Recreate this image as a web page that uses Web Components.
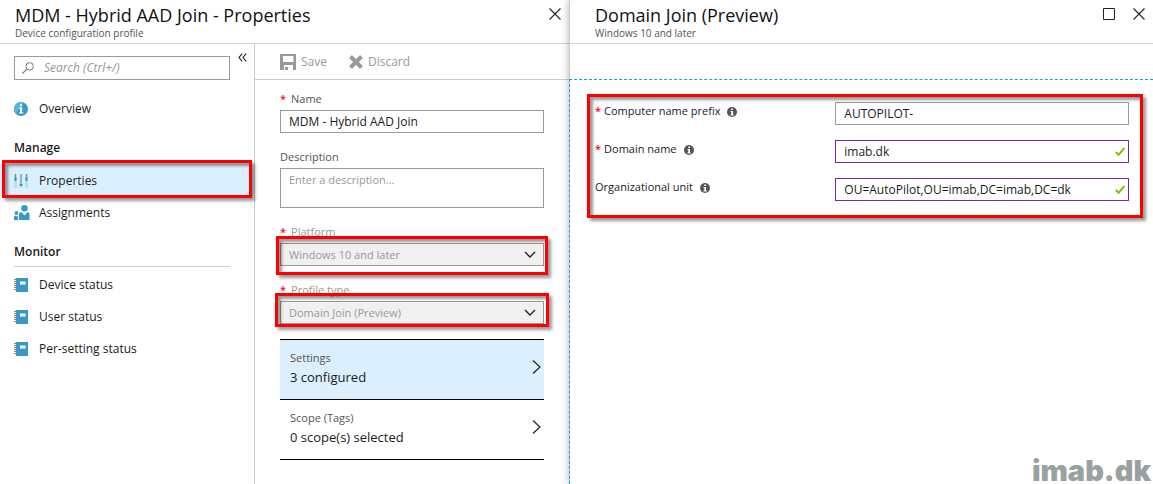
<!DOCTYPE html>
<html lang="en">
<head>
<meta charset="utf-8">
<title>MDM - Hybrid AAD Join - Properties</title>
<style>
  html, body { margin: 0; min-height: 100vh; background: #fff; }
  body { font-family: "Open Sans", "Noto Sans", sans-serif; font-size: 12px; line-height: 16px; color: #1b1b1b; }
</style>
</head>
<body>
<portal-page></portal-page>

<script>
const define = (name, html, setup) => {
  const template = document.createElement('template');
  template.innerHTML = html;
  customElements.define(name, class extends HTMLElement {
    connectedCallback() {
      if (this.shadowRoot) return;
      const root = this.attachShadow({ mode: 'open' });
      root.append(template.content.cloneNode(true));
      if (setup) setup(this, root);
    }
  });
};

/* ---------- icons ---------- */
const icons = {
  close: [12, 12, '<path d="M.5.5l11 11M11.5.5l-11 11" fill="none" stroke="#222" stroke-width="1.1"/>'],
  maximize: [12, 12, '<path d="M.5.5h11v11H.5z" fill="none" stroke="#222"/>'],
  search: [12, 12, '<circle cx="7.6" cy="4.4" r="3.8" fill="none" stroke="#777"/><path d="M4.8 7.2L.5 11.5" fill="none" stroke="#777" stroke-width="1.2"/>'],
  collapse: [9, 9, '<path d="M4.2.7L1 4.5l3.2 3.8M8.2.7L5 4.5l3.2 3.8" fill="none" stroke="#222" stroke-width="1.1"/>'],
  info: [14, 14, '<circle cx="7" cy="7" r="7" fill="#3999c6"/><path d="M7 0a7 7 0 0 0-5 11.9L9.9.6A7 7 0 0 0 7 0z" fill="#5cb4d9"/><rect x="6" y="2.3" width="2.2" height="2" rx=".8" fill="#fff"/><path d="M5.2 5.3h3v4.900h1v1.200H5v-1.200h1V6.500h-.8z" fill="#fff"/>'],
  sliders: [14, 14, '<path d="M0 0h3v14H0zM5.500 0h3v14h-3zM11 0h3v14h-3z" fill="#b9e0f1"/><path d="M1.500 0v7M7 0v12M12.500 0v7" stroke="#6d8b99" fill="none"/><path d="M.5 3h2v4h-2zM5.500 10h3v2h-3zM11.500 3h2v4h-2z" fill="#3999c6"/>'],
  people: [16, 16, '<circle cx="10.500" cy="3.300" r="3.300" fill="#3999c6"/><path d="M5 15V9.500Q5 7 7.500 7l3 3.500 3-3.500Q15.500 7 15.500 9.500V15z" fill="#3999c6"/><circle cx="2.500" cy="8" r="1.900" fill="#3999c6"/><path d="M0 15v-2.500Q0 10.500 1.500 10.500l1 1 1.500-.8V15z" fill="#3999c6"/>'],
  book: [14, 14, '<path d="M2 0h12v14H2z" fill="#3999c6"/><path d="M6 3.500h5.500v3H6z" fill="#fff"/><path d="M0 1.500h3M0 3.500h3M0 5.500h3M0 7.500h3M0 9.500h3M0 11.500h3" stroke="#7b8b93" fill="none"/>'],
  save: [16, 16, '<path d="M0 0h16v16H0z" fill="#999"/><path d="M3 2h10.500v6H3zM4 11h9v5H4z" fill="#fff"/><path d="M5 13h3v3H5z" fill="#999"/>'],
  discard: [14, 14, '<path d="M1.500 1.500l11 11M12.500 1.500l-11 11" fill="none" stroke="#999" stroke-width="4"/>'],
  down: [12, 7, '<path d="M1 1l5 5 5-5" fill="none" stroke="#222" stroke-width="1.400"/>'],
  next: [9, 14, '<path d="M1 .5L8 7l-7 6.500" fill="none" stroke="#222" stroke-width="1.200"/>'],
  help: [10, 10, '<circle cx="5" cy="5" r="5" fill="#555"/><path d="M4.300 1.500h1.700v1.500H4.300zM3.500 4H6v3.500h.8v1H3.400v-1h.9V5h-.8z" fill="#fff"/>'],
  check: [10, 9, '<path d="M.8 5L3.600 7.800 9.300 1" fill="none" stroke="#7fba00" stroke-width="1.900"/>']
};
define('ui-icon', `<style>:host{display:inline-block;flex:none}svg{display:block}</style>`, (host, root) => {
  const [w, h, body] = icons[host.getAttribute('name')];
  root.innerHTML += `<svg width="${w}" height="${h}" viewBox="0 0 ${w} ${h}" aria-hidden="true">${body}</svg>`;
});

/* ---------- red annotation drawn round its content ---------- */
define('mark-frame', `
<style>
  :host { display: block; position: relative; }
  i { position: absolute; inset: var(--out, -6px); border: 3px solid #fe0000; pointer-events: none; z-index: 2;
      box-shadow: 3px 3px 3px rgba(0,0,0,.4), inset 3px 3px 3px rgba(0,0,0,.4); }
</style><slot></slot><i></i>`);

/* ---------- blade ---------- */
define('portal-blade', `
<style>
  :host { display: flex; flex-direction: column; min-width: 0; background: #fff; }
  header { display: flex; align-items: flex-start; box-sizing: border-box; height: 44px; padding: 4px 8px 0 var(--inset, 15px); border-bottom: 1px solid #d1d1d1; }
  hgroup { flex: 1; min-width: 0; }
  h1 { margin: 0; font-size: 18px; line-height: 22px; font-weight: 500; color: #111; white-space: nowrap; }
  p { margin: 0; font-size: 10px; line-height: 14px; color: #555; }
  nav { display: flex; gap: 18px; padding-top: 4px; }
  button { display: block; border: 0; margin: 0; padding: 0; background: none; }
  main { flex: 1; display: flex; flex-direction: column; }
</style>
<header><hgroup><h1></h1><p></p></hgroup><nav></nav></header>
<main><slot></slot></main>`, (host, root) => {
  root.querySelector('h1').textContent = host.getAttribute('heading');
  root.querySelector('p').textContent = host.getAttribute('subheading');
  root.querySelector('nav').innerHTML = host.getAttribute('actions').split(' ')
    .map(n => `<button type="button" aria-label="${n}"><ui-icon name="${n}"></ui-icon></button>`).join('');
});

/* ---------- side menu ---------- */
define('menu-item', `
<style>
  :host { display: block; }
  a { display: flex; align-items: center; box-sizing: border-box; height: 32px; padding: 1px 0 0 14px; color: #1b1b1b; text-decoration: none; font-size: 12px; }
  :host([selected]) a { background: #dcefff; }
  span { display: flex; width: 25px; flex: none; }
</style><a href="#"><span></span><slot></slot></a>`, (host, root) => {
  root.querySelector('span').innerHTML = `<ui-icon name="${host.getAttribute('icon')}"></ui-icon>`;
});
define('menu-section', `
<style>
  :host { display: block; }
  h2 { margin: 0 24px 1px 14px; padding: 16px 0 6px; border-bottom: 1px solid #ccc; font-size: 12px; line-height: 16px; font-weight: 600; }
</style><h2></h2><slot></slot>`, (host, root) => {
  root.querySelector('h2').textContent = host.getAttribute('heading');
});
define('side-menu', `
<style>
  :host { display: block; box-sizing: border-box; border-right: 1px solid #ccc; }
  .top { display: flex; align-items: flex-start; gap: 8px; padding: 12px 7px 12px 14px; }
  .box { flex: 1; display: flex; align-items: center; gap: 10px; box-sizing: border-box; height: 24px; padding: 0 7px; border: 1px solid #999; min-width: 0; }
  input { flex: 1; min-width: 0; border: 0; padding: 0; outline: 0; background: none; font: italic 12px/16px "Open Sans", sans-serif; }
  input::placeholder { color: #999; opacity: 1; }
  button { border: 0; padding: 0; margin-top: -6px; background: none; }
  mark-frame { --out: -4px 2px -2px 2px; }
</style>
<div class="top">
  <div class="box"><ui-icon name="search"></ui-icon><input type="search" aria-label="Search" placeholder="Search (Ctrl+/)"></div>
  <button type="button" aria-label="Collapse menu"><ui-icon name="collapse"></ui-icon></button>
</div>
<menu-item icon="info">Overview</menu-item>
<menu-section heading="Manage">
  <mark-frame><menu-item icon="sliders" selected>Properties</menu-item></mark-frame>
  <menu-item icon="people">Assignments</menu-item>
</menu-section>
<menu-section heading="Monitor">
  <menu-item icon="book">Device status</menu-item>
  <menu-item icon="book">User status</menu-item>
  <menu-item icon="book">Per-setting status</menu-item>
</menu-section>`);

/* ---------- toolbar ---------- */
define('tool-bar', `
<style>
  :host { display: flex; gap: 22px; box-sizing: border-box; height: 36px; align-items: center; padding: 1px 0 0 25px; border-bottom: 1px solid #ccc; }
  button { display: flex; align-items: center; gap: 5px; border: 0; padding: 0; background: none; color: #999; font: 12px/16px "Open Sans", sans-serif; }
</style>
<button type="button" disabled><ui-icon name="save"></ui-icon>Save</button>
<button type="button" disabled><ui-icon name="discard"></ui-icon>Discard</button>`);

/* ---------- form fields ---------- */
define('form-field', `
<style>
  :host { display: block; }
  .field { display: flex; flex-direction: column; gap: 3px; }
  label { font-size: 11px; line-height: 16px; color: #555; }
  :host([kind=select]) label { color: #999; }
  b { color: #e81123; font-weight: 600; margin-right: 5px; }
  :host([inline]) .field { display: grid; grid-template-columns: minmax(0, 9fr) minmax(0, 11fr); gap: 0; align-items: start; }
  :host([inline]) label { color: #1b1b1b; padding-top: 1px; }
  :host([inline]) b { margin-right: 3px; color: #f00; }
  label ui-icon { margin-left: 7px; vertical-align: -2px; }
  .control { display: grid; align-items: center; }
  .control > * { grid-area: 1 / 1; }
  .control > ui-icon { justify-self: end; margin-right: 8px; pointer-events: none; }
  :host([valid]) .control > ui-icon { margin-right: 4px; }
  input, textarea, select { display: block; box-sizing: border-box; width: 100%; height: 23px; margin: 0; padding: 0 8px; border: 1px solid #999; border-radius: 0; background: #fff; color: #1b1b1b; font: 11px/16px "Open Sans", sans-serif; resize: none; outline: 0; }
  input { font-size: 12px; }
  textarea { height: 40px; padding-top: 3px; overflow: hidden; }
  textarea::placeholder { color: #999; opacity: 1; }
  select { appearance: none; background: #f0f0f0; color: #999; opacity: 1; }
  :host([valid]) input { border-color: #881fa3; }
</style>
<div class="field"><label for="c"></label></div>`, (host, root) => {
  const at = n => host.getAttribute(n);
  const kind = at('kind');
  root.querySelector('label').innerHTML =
    (host.hasAttribute('required') ? '<b>*</b>' : '') + at('label') + (host.hasAttribute('inline') ? '<ui-icon name="help"></ui-icon>' : '');
  const control = kind === 'select' ? `<select id="c" disabled><option>${at('value')}</option></select><ui-icon name="down"></ui-icon>`
    : kind === 'textarea' ? `<textarea id="c" placeholder="${at('placeholder')}"></textarea>`
    : `<input id="c" type="text" value="${at('value')}">` + (host.hasAttribute('valid') ? '<ui-icon name="check"></ui-icon>' : '');
  const box = `<div class="control">${control}</div>`;
  root.querySelector('.field').insertAdjacentHTML('beforeend', host.hasAttribute('marked') ? `<mark-frame>${box}</mark-frame>` : box);
});

/* ---------- drill-in rows ---------- */
define('link-row', `
<style>
  :host { display: block; border-bottom: 1px solid #000; }
  a { display: flex; align-items: center; justify-content: space-between; box-sizing: border-box; min-height: 59px; padding: 0 3px 2px 10px; color: #1b1b1b; text-decoration: none; }
  :host([selected]) a { background: #dcefff; }
  small { display: block; font-size: 11px; line-height: 16px; color: #555; }
  span { display: block; font-size: 13px; line-height: 22px; }
  ui-icon { margin-bottom: 4px; }
</style><a href="#"><div><small></small><span><slot></slot></span></div><ui-icon name="next"></ui-icon></a>`, (host, root) => {
  root.querySelector('small').textContent = host.getAttribute('label');
});

/* ---------- page ---------- */
define('portal-page', `
<style>
  :host { display: grid; grid-template-columns: minmax(0, 569fr) minmax(0, 584fr); min-height: 100vh; position: relative; }
  .split { flex: 1; display: grid; grid-template-columns: 255px minmax(0, 1fr); }
  form { display: flex; flex-direction: column; gap: 16px; padding: 11px 25px 24px; }
  .platform { --out: -7px -4px -9px; }
  .profile { --out: -8px -5px -3px; }
  .rows { border-top: 1px solid #000; margin-top: -1px; }
  .second { --inset: 25px; position: relative; border-left: 1px solid #ccc; box-shadow: 0 0 8px rgba(0,0,0,.3); clip-path: inset(0 0 0 -10px); }
  .gap { height: 35px; }
  .canvas { flex: 1; padding: 22px 24px 24px 25px; margin-left: -1px; border: 1px dashed #1ba1d8; border-width: 1px 0 0 1px; }
  .fields { display: flex; flex-direction: column; gap: 15px; }
  .canvas mark-frame { --out: -8px -14px -17px -8px; }
  .brand { position: absolute; right: 2px; bottom: 1px; font: 900 29px/24px Inter, sans-serif; color: #98a29e; }
</style>
<portal-blade heading="MDM - Hybrid AAD Join - Properties" subheading="Device configuration profile" actions="close">
  <div class="split">
    <side-menu></side-menu>
    <section>
      <tool-bar></tool-bar>
      <form>
        <form-field required label="Name" value="MDM - Hybrid AAD Join"></form-field>
        <form-field kind="textarea" label="Description" placeholder="Enter a description..."></form-field>
        <form-field class="platform" marked required kind="select" label="Platform" value="Windows 10 and later"></form-field>
        <form-field class="profile" marked required kind="select" label="Profile type" value="Domain Join (Preview)"></form-field>
        <div class="rows">
          <link-row selected label="Settings">3 configured</link-row>
          <link-row label="Scope (Tags)">0 scope(s) selected</link-row>
        </div>
      </form>
    </section>
  </div>
</portal-blade>
<portal-blade class="second" heading="Domain Join (Preview)" subheading="Windows 10 and later" actions="maximize close">
  <div class="gap"></div>
  <div class="canvas">
    <mark-frame><div class="fields">
      <form-field inline required label="Computer name prefix" value="AUTOPILOT-"></form-field>
      <form-field inline required valid label="Domain name" value="imab.dk"></form-field>
      <form-field inline valid label="Organizational unit" value="OU=AutoPilot,OU=imab,DC=imab,DC=dk"></form-field>
    </div></mark-frame>
  </div>
</portal-blade>
<div class="brand">imab.dk</div>`);
</script>
</body>
</html>
